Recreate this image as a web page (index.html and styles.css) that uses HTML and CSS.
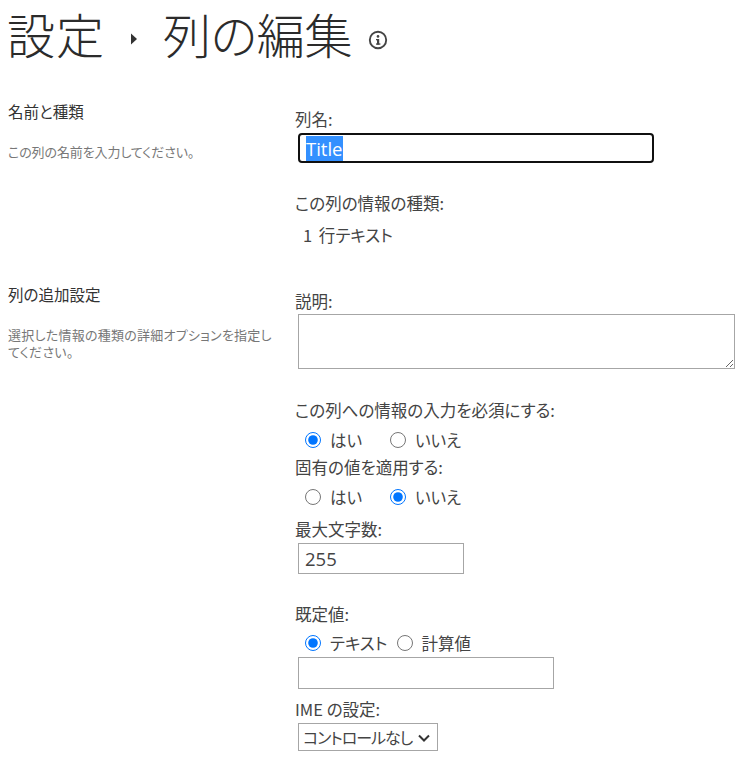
FILE: index.html
```html
<!DOCTYPE html>
<html lang="ja">
<head>
  <meta charset="UTF-8">
  <title>列の編集</title>
  <link rel="stylesheet" href="styles.css">
</head>
<body>
  <h1 class="page-title">
    <span>設定</span>
    <svg class="crumb-arrow" width="8" height="12" viewBox="0 0 8 12"><path d="M1 0.5l6 5.5-6 5.5z" fill="#333"/></svg>
    <span class="title-current">列の編集</span>
    <svg class="info-icon" width="20" height="20" viewBox="0 0 20 20">
      <circle cx="10" cy="10" r="8.2" fill="none" stroke="#444" stroke-width="1.9"/>
      <rect x="9" y="9" width="2.2" height="5.6" fill="#444"/>
      <rect x="8" y="9" width="2" height="1.3" fill="#444"/>
      <rect x="8" y="13.4" width="4.4" height="1.3" fill="#444"/>
      <circle cx="10" cy="6.4" r="1.3" fill="#444"/>
    </svg>
  </h1>

  <div class="section section-name">
    <div class="section-info">
      <h2>名前と種類</h2>
      <p>この列の名前を入力してください。</p>
    </div>
    <div class="section-fields">
      <label for="columnName">列名:</label>
      <input type="text" id="columnName" class="name-input" value="Title" autofocus>
      <div class="field-label type-label">この列の情報の種類:</div>
      <div class="type-value">1 行テキスト</div>
    </div>
  </div>

  <div class="section section-extra">
    <div class="section-info">
      <h2>列の追加設定</h2>
      <p>選択した情報の種類の詳細オプションを指定してください。</p>
    </div>
    <div class="section-fields">
      <label for="description">説明:</label>
      <textarea id="description" class="desc-input"></textarea>

      <div class="field-label required-label">この列への情報の入力を必須にする:</div>
      <div class="radio-row">
        <label class="radio radio-wide"><input type="radio" name="required" checked>はい</label>
        <label class="radio"><input type="radio" name="required">いいえ</label>
      </div>

      <div class="field-label">固有の値を適用する:</div>
      <div class="radio-row">
        <label class="radio radio-wide"><input type="radio" name="unique">はい</label>
        <label class="radio"><input type="radio" name="unique" checked>いいえ</label>
      </div>

      <label for="maxLength" class="field-label max-label">最大文字数:</label>
      <input type="text" id="maxLength" class="max-input" value="255">

      <div class="field-label default-label">既定値:</div>
      <div class="radio-row default-row">
        <label class="radio"><input type="radio" name="defaultType" checked>テキスト</label>
        <label class="radio"><input type="radio" name="defaultType">計算値</label>
      </div>
      <input type="text" class="default-input">

      <label for="ime" class="field-label ime-label">IME の設定:</label>
      <select id="ime" class="ime-select">
        <option>コントロールなし</option>
      </select>
    </div>
  </div>

  <script src="script.js"></script>
</body>
</html>
```

FILE: styles.css
```css
body {
  margin: 0;
  padding: 0 8px;
  background-color: #fff;
  color: #444;
  font-family: "Noto Sans CJK JP", "Open Sans", sans-serif;
  font-size: 16.5px;
  font-feature-settings: "palt";
  line-height: 24px;
}

.page-title {
  display: flex;
  align-items: flex-start;
  margin: 0 0 0 -1px;
  height: 64px;
  font-size: 48px;
  font-weight: 300;
  letter-spacing: 1px;
  line-height: 66px;
  color: #2b2b2b;
}

.title-current {
  letter-spacing: -0.25px;
}

.crumb-arrow {
  margin: 33px 25px 0 25px;
}

.info-icon {
  margin: 30px 0 0 16px;
}

.section {
  display: flex;
}

.section-name {
  margin-top: 35px;
  height: 183px;
}

.section-info {
  width: 287px;
  flex-shrink: 0;
}

.section-info h2 {
  margin: 0;
  font-size: 15.5px;
  font-weight: 400;
  line-height: 24px;
  color: #333;
}

.section-info p {
  margin: 20px 0 0;
  width: 268px;
  font-size: 13px;
  letter-spacing: -0.1px;
  line-height: 17px;
  color: #777;
}

.section-extra .section-info p {
  letter-spacing: 0.25px;
}

.section-fields {
  display: flex;
  flex-direction: column;
  align-items: flex-start;
  padding-top: 8px;
}

.section-extra .section-fields {
  padding-top: 7px;
}

.field-label {
  display: block;
}

.name-input,
.desc-input,
.max-input,
.default-input,
.ime-select {
  box-sizing: border-box;
  margin: 0 0 0 3px;
  border: 1px solid #a6a6a6;
  background-color: #fff;
  color: #444;
  font-family: "Open Sans", "Noto Sans CJK JP", sans-serif;
  font-size: 18.5px;
}

.name-input {
  width: 356px;
  height: 30px;
  margin-top: 2px;
  padding: 0 7px;
  border-radius: 2px;
}

.name-input::selection {
  background-color: #3390ff;
  color: #fff;
}

.type-label {
  margin-top: 28px;
}

.type-value {
  margin: 8px 0 0 8px;
  word-spacing: 3px;
}

.desc-input {
  display: block;
  width: 437px;
  height: 55px;
  margin-top: 1px;
  padding: 2px;
}

.required-label {
  margin-top: 29px;
}

.radio-row {
  display: flex;
  height: 29px;
  margin: 3px 0 1px;
  align-items: center;
  padding-left: 10px;
}

.radio {
  display: flex;
  align-items: center;
}

.radio input {
  width: 16px;
  height: 16px;
  margin: 0 9px 0 0;
}

.radio-wide {
  width: 85px;
}

.max-label {
  margin-top: 5px;
}

.max-input {
  width: 166px;
  height: 31px;
  margin-top: 2px;
  padding: 0 6px;
}

.default-label {
  margin-top: 28px;
}

.default-row {
  height: 26px;
  margin: 4px 0 0;
  gap: 9px;
}

.default-input {
  width: 256px;
  height: 32px;
  margin-top: 1px;
  padding: 0 7px;
}

.ime-label {
  margin-top: 8px;
}

.ime-select {
  width: 140px;
  height: 28px;
  margin-top: 2px;
  padding: 0 0 0 4px;
  appearance: none;
  border-radius: 0;
  background-image: url("data:image/svg+xml,%3Csvg xmlns='http://www.w3.org/2000/svg' width='12' height='8'%3E%3Cpath d='M1 1.5l5 5 5-5' fill='none' stroke='%23333' stroke-width='2'/%3E%3C/svg%3E");
  background-repeat: no-repeat;
  background-position: 119px 10px;
  font-family: "Noto Sans CJK JP", sans-serif;
  font-size: 16px;
  font-feature-settings: "palt";
  letter-spacing: -1px;
}
```

FILE: script.js
```js
// Title starts out selected
const nameInput = document.getElementById('columnName');
nameInput.focus();
nameInput.select();
```
